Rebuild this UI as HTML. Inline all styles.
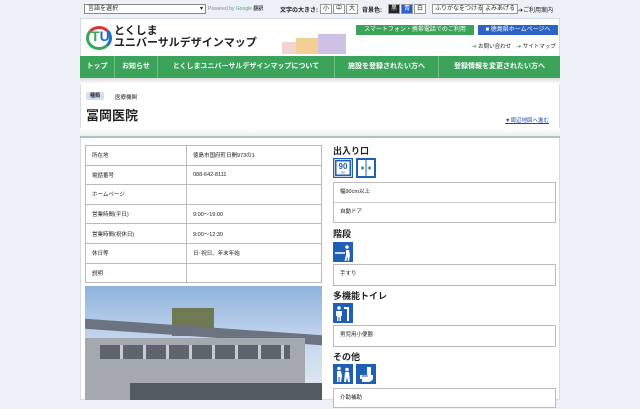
<!DOCTYPE html>
<html><head><meta charset="utf-8"><style>
*{margin:0;padding:0;box-sizing:border-box}
body{width:640px;height:400px;overflow:hidden;background:#eef0f7;font-family:"Liberation Sans","Noto Sans CJK JP",sans-serif;color:#222;position:relative}
.a{position:absolute}
.wrap{left:80px;top:18px;width:480px;height:382px;background:#fff;border:1px solid #d6dbe4}
.nav{left:80px;top:56px;width:480px;height:22px;background:#3ba35a;color:#fff;font-size:7px;font-weight:bold}
.nav div{position:absolute;top:0;height:22px;line-height:22px;text-align:center;border-right:1px solid #6cc082}
.sel{left:84px;top:4px;width:122px;height:10px;border:1px solid #888;background:#fff;font-size:6px;line-height:8px;padding-left:3px}
.t6{font-size:6px}
.btn{border:1px solid #999;background:#fff;font-size:6px;line-height:8px;height:10px;padding:0 2px;top:4px}
table{border-collapse:collapse;font-size:5.5px}
td{border:1px solid #bbb;height:19.6px;padding-left:6px}
.h{font-size:9px;font-weight:bold}
.ic{width:20px;height:20px;display:block}
.box{border:1px solid #bbb;font-size:5.5px;left:333px;width:223px;background:#fff}
.box div{height:19.5px;line-height:19.5px;padding-left:6px;border-bottom:1px solid #ccc}
.box div:last-child{border-bottom:none}
</style></head><body>
<div class="a sel">言語を選択<span style="float:right;margin-right:2px">▾</span></div>
<div class="a t6" style="left:208px;top:5px;color:#888;font-size:5px">Powered by <span style="color:#4a7">Google</span> <b style="color:#444">翻訳</b></div>
<div class="a t6" style="left:280px;top:5px;font-weight:bold">文字の大きさ:</div>
<div class="a btn" style="left:320px">小</div><div class="a btn" style="left:333px">中</div><div class="a btn" style="left:346px">大</div>
<div class="a t6" style="left:362px;top:5px;font-weight:bold">背景色:</div>
<div class="a btn" style="left:388px;background:#222;color:#fff">黒</div><div class="a btn" style="left:401px;background:#2a5fd0;color:#fff">青</div><div class="a btn" style="left:414px">白</div>
<div class="a btn" style="left:432px">ふりがなをつける</div><div class="a btn" style="left:482px">よみあげる</div>
<div class="a t6" style="left:518px;top:5px">➔ご利用案内</div>
<div class="a wrap"></div>
<div class="a" style="left:86px;top:26px;width:26px;height:24px;border-radius:50%;border:3px solid #3aa55a;border-right-color:#1f6fc0;border-top-color:#e03030"></div>
<div class="a" style="left:91px;top:28px;font-weight:bold;font-size:14px"><span style="color:#3aa55a">T</span><span style="color:#1f6fc0">U</span></div>
<div class="a" style="left:114px;top:25px;font-size:11px;font-weight:bold;line-height:12px">とくしま<br>ユニバーサルデザインマップ</div>
<div class="a" style="left:282px;top:42px;width:22px;height:12px;background:#f0d3d3"></div>
<div class="a" style="left:296px;top:38px;width:30px;height:16px;background:#f2cf93"></div>
<div class="a" style="left:318px;top:34px;width:28px;height:20px;background:#cfc0e6"></div>
<div class="a" style="left:356px;top:25px;width:118px;height:10px;background:#3ba35a;color:#fff;font-size:6px;line-height:10px;text-align:center">スマートフォン・携帯電話でのご利用</div>
<div class="a" style="left:478px;top:25px;width:80px;height:10px;background:#2b64c6;color:#fff;font-size:6px;line-height:10px;text-align:center">■ 徳島県ホームページへ</div>
<div class="a" style="left:472px;top:42px;font-size:5.5px"><span style="color:#3ba35a">➔</span> お問い合わせ　<span style="color:#3ba35a">➔</span> サイトマップ</div>
<div class="a nav">
<div style="left:0;width:35px">トップ</div><div style="left:35px;width:43px">お知らせ</div><div style="left:78px;width:177px">とくしまユニバーサルデザインマップについて</div><div style="left:255px;width:104px">施設を登録されたい方へ</div><div style="left:359px;width:121px;border:none">登録情報を変更されたい方へ</div></div>
<div class="a" style="left:80px;top:78px;width:480px;height:6px;background:linear-gradient(#ddd,#fff)"></div>
<div class="a" style="left:86px;top:92px;width:18px;height:8px;background:#d4def2;border-radius:2px;font-size:5px;text-align:center;line-height:8px;font-weight:bold">種類</div>
<div class="a" style="left:115px;top:93px;font-size:5.5px">医療機関</div>
<div class="a" style="left:86px;top:105px;font-size:13px;font-weight:bold">冨岡医院</div>
<div class="a" style="left:505px;top:116px;font-size:5.5px;color:#2249b0;text-decoration:underline">▼周辺地図へ進む</div>
<div class="a" style="left:80px;top:128px;width:480px;height:8px;background:linear-gradient(#fff,#eee)"></div>
<div class="a" style="left:80px;top:136px;width:480px;height:2px;background:#a9c9b6"></div>
<table class="a" style="left:85px;top:145px;width:237px">
<tr><td style="width:101px">所在地</td><td>徳島市国府町日開973の1</td></tr>
<tr><td>電話番号</td><td>088-642-8111</td></tr>
<tr><td>ホームページ</td><td></td></tr>
<tr><td>営業時間(平日)</td><td>9:00〜19:00</td></tr>
<tr><td>営業時間(祝休日)</td><td>9:00〜12:30</td></tr>
<tr><td>休日等</td><td>日･祝日、年末年始</td></tr>
<tr><td>説明</td><td></td></tr></table>
<div class="a" style="left:85px;top:286px;width:237px;height:114px;background:linear-gradient(#8fb3dd,#c7d8ee 50%,#e6ecf2)"></div>
<div class="a" style="left:172px;top:308px;width:42px;height:28px;background:#6d7a52"></div>
<div class="a" style="left:85px;top:327px;width:237px;height:10px;background:#6b7280;transform:skewY(4deg)"></div>
<div class="a" style="left:85px;top:338px;width:220px;height:62px;background:#a4a9b0"></div>
<div class="a" style="left:100px;top:345px;width:190px;height:14px;background:repeating-linear-gradient(90deg,#5e646c 0 20px,#c9ccd0 20px 23px)"></div>
<div class="a" style="left:130px;top:383px;width:192px;height:17px;background:#545a62"></div>
<div class="a h" style="left:333px;top:144px">出入り口</div>
<svg class="a ic" style="left:333px;top:158px" viewBox="0 0 20 20"><rect x="0.5" y="0.5" width="19" height="19" fill="#fff" stroke="#1f5fb4" stroke-width="1.5"/><rect x="2" y="2" width="16" height="16" fill="#1f5fb4"/><rect x="3.5" y="3.5" width="13" height="13" fill="#fff"/><text x="10" y="11" font-size="8" font-weight="bold" fill="#1f5fb4" text-anchor="middle" font-family="Liberation Sans">90</text><text x="10" y="15.5" font-size="3.5" fill="#1f5fb4" text-anchor="middle" font-family="Liberation Sans">cm</text></svg>
<svg class="a ic" style="left:356px;top:158px" viewBox="0 0 20 20"><rect width="20" height="20" fill="#1f5fb4"/><rect x="2" y="2" width="16" height="16" fill="#fff"/><path d="M10 2v16" stroke="#1f5fb4" stroke-width="1"/><path d="M8.5 10l-3-2v4zM11.5 10l3-2v4z" fill="#1f5fb4"/></svg>
<div class="a box" style="top:182px"><div>幅90cm以上</div><div>自動ドア</div></div>
<div class="a h" style="left:333px;top:227px">階段</div>
<svg class="a ic" style="left:333px;top:242px" viewBox="0 0 20 20"><rect width="20" height="20" fill="#1f5fb4"/><path d="M2 11h10" stroke="#fff" stroke-width="1.5"/><circle cx="14" cy="5" r="1.8" fill="#fff"/><path d="M13 8h3l1 5-1 6h-1.5l.5-5-2 5h-1.5l1.5-6z" fill="#fff"/></svg>
<div class="a box" style="top:264px"><div>手すり</div></div>
<div class="a h" style="left:333px;top:289px">多機能トイレ</div>
<svg class="a ic" style="left:333px;top:303px" viewBox="0 0 20 20"><rect width="20" height="20" fill="#1f5fb4"/><circle cx="6" cy="5" r="1.8" fill="#fff"/><path d="M3 8h6v5H8v5H6.5v-4h-1v4H4v-5H3z" fill="#fff"/><path d="M11 4h5v14h-2V6h-3z" fill="#fff"/></svg>
<div class="a box" style="top:325px"><div>男児用小便器</div></div>
<div class="a h" style="left:333px;top:350px">その他</div>
<svg class="a ic" style="left:333px;top:364px" viewBox="0 0 20 20"><rect width="20" height="20" fill="#1f5fb4"/><circle cx="6" cy="4.5" r="1.8" fill="#fff"/><circle cx="14" cy="5.5" r="1.8" fill="#fff"/><path d="M4 7h4l1 5-1 6H6.5v-5h-1v5H4zM12 8h4l1 10h-2l-1-5-1 5h-2z" fill="#fff"/></svg>
<svg class="a ic" style="left:356px;top:364px" viewBox="0 0 20 20"><rect width="20" height="20" fill="#1f5fb4"/><path d="M11 3h4v8h2v3c0 3-3 4-6 4H6v-3H4v-4h7z" fill="#fff"/><path d="M6 12h6" stroke="#1f5fb4"/></svg>
<div class="a box" style="top:388px;height:20px"><div>介助補助</div></div>
</body></html>
